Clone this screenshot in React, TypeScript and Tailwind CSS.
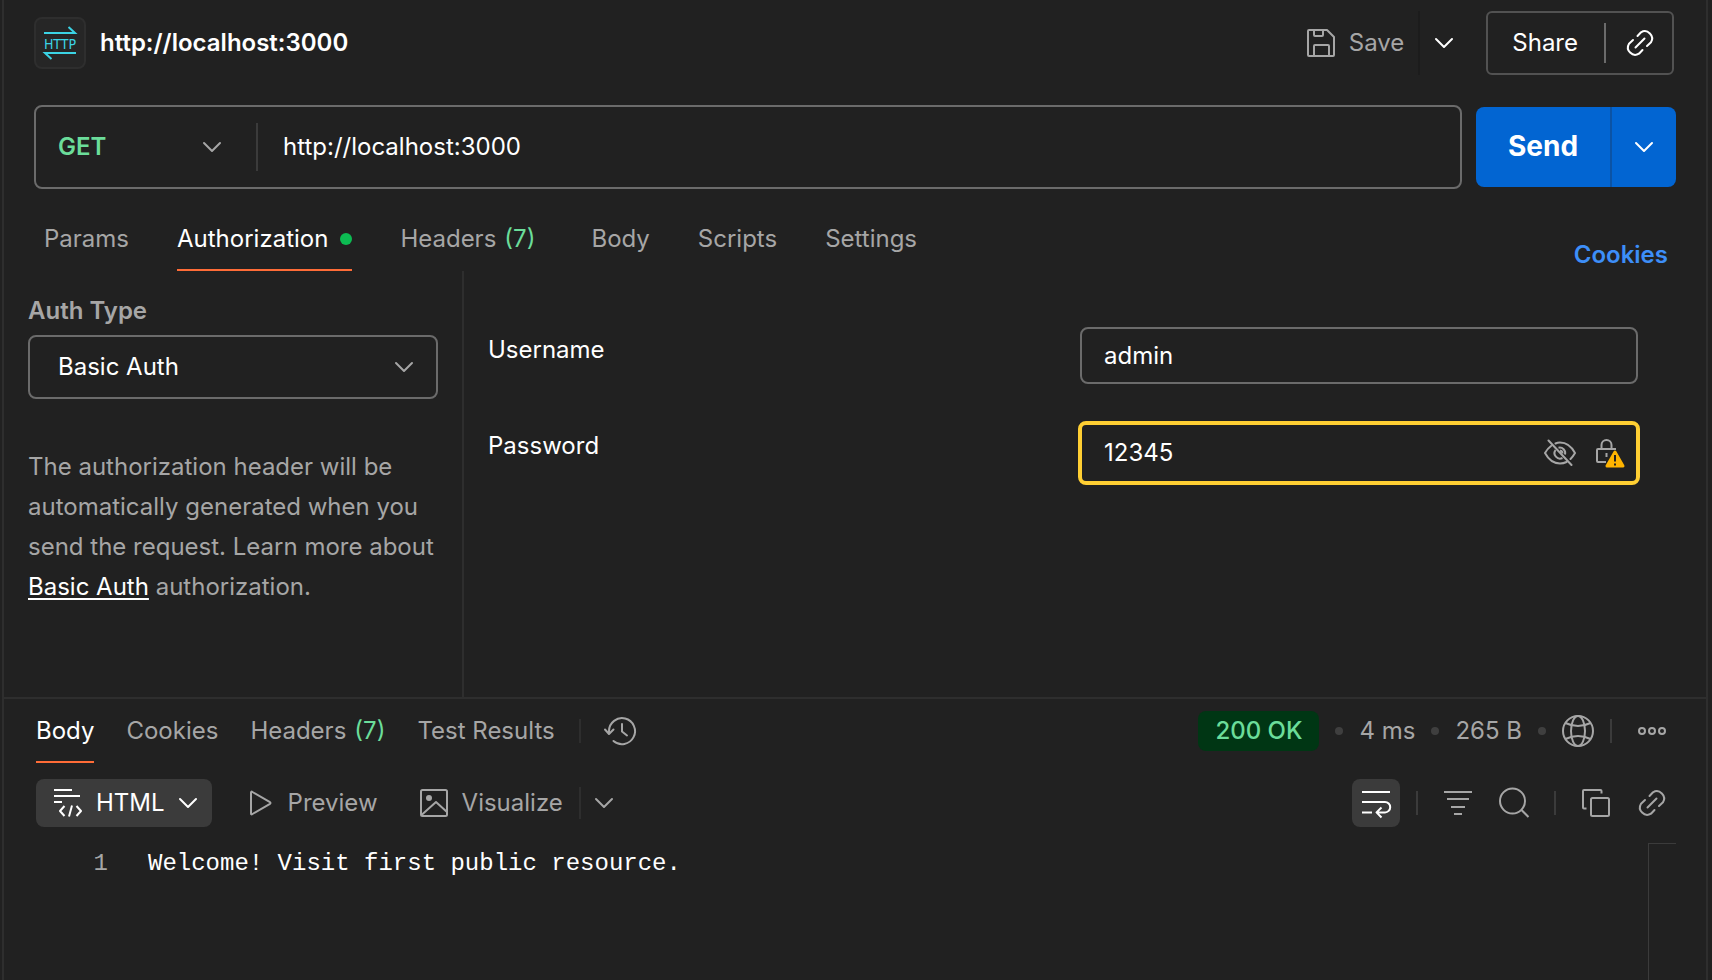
import { useState } from "react";
import type { ReactNode } from "react";

type IconProps = { className?: string };

function Svg({ box, className, children }: { box: string; className?: string; children: ReactNode }) {
  return (
    <svg
      viewBox={box}
      className={className}
      fill="none"
      stroke="currentColor"
      strokeWidth={2}
      strokeLinejoin="round"
      aria-hidden="true"
    >
      {children}
    </svg>
  );
}

const HttpIcon = ({ className }: IconProps) => (
  <Svg box="0 0 36 36" className={className}>
    <path d="M2 8H33L26.5 2M34 28H3L9.500 34" strokeLinejoin="miter" />
    <text
      x="18"
      y="23.5"
      textAnchor="middle"
      fill="currentColor"
      stroke="none"
      className="font-['Liberation_Sans_Narrow','DejaVu_Sans_Condensed',sans-serif] text-[14px]"
    >
      HTTP
    </text>
  </Svg>
);

const Chevron = ({ className }: IconProps) => (
  <Svg box="0 0 20 12" className={className}>
    <path d="M2 2L10 10L18 2" strokeLinecap="round" />
  </Svg>
);

const SaveIcon = ({ className }: IconProps) => (
  <Svg box="0 0 32 32" className={className}>
    <path d="M4 3H22L29 10V28Q29 29 28 29H4Q3 29 3 28V4Q3 3 4 3Z" />
    <path d="M9 3V8Q9 9 10 9H17Q18 9 18 8V3M9 29V19Q9 18 10 18H23Q24 18 24 19V29" />
  </Svg>
);

const LinkIcon = ({ className }: IconProps) => (
  <Svg box="0 0 32 32" className={className}>
    <path
      d="M11.500 20.500L20.500 11.500M13.500 9L17 5.300A7.300 7.300 0 0 1 27 15.300L23 19M18.500 23L15 26.700A7.300 7.300 0 0 1 5 16.700L9 13"
      strokeLinecap="round"
    />
  </Svg>
);

const EyeOffIcon = ({ className }: IconProps) => (
  <Svg box="0 0 32 32" className={className}>
    <path d="M4.500 3.500L27.500 28M11.500 6.500Q13.500 5.500 16 5.500C22 5.500 27.500 9.500 31 16Q29 19.500 26.500 22M22.500 25Q19.500 26.500 16 26.500C10 26.500 4.500 22.500 1 16Q3.500 11.500 7 9" strokeLinecap="round" />
    <path d="M14.500 10.700A5.500 5.500 0 0 1 21 17.500M18.500 21A5.500 5.500 0 0 1 11.500 13M16 13.500Q18.500 14 18.500 16.500" />
  </Svg>
);

const LockWarningIcon = ({ className }: IconProps) => (
  <Svg box="0 0 32 32" className={className}>
    <path d="M22 12H4Q3 12 3 13V24Q3 25 4 25H12M7.500 12V8A5 5 0 0 1 17.500 8V12M12.500 16V20" />
    <path d="M21 15L29 29H13Z" fill="#ffb400" stroke="#ffb400" strokeWidth={3} />
    <path d="M21 18V24.500M21 26.500V28.500" stroke="#212121" />
  </Svg>
);

const HistoryIcon = ({ className }: IconProps) => (
  <Svg box="0 0 36 32" className={className}>
    <path d="M6 18V16A13 13 0 1 1 10.500 26M2 14.500L6 19L10.500 14.500M19 9V16.500L24 20.500" strokeLinecap="round" />
  </Svg>
);

const GlobeIcon = ({ className }: IconProps) => (
  <Svg box="0 0 34 34" className={className}>
    <circle cx="17" cy="17" r="15" />
    <ellipse cx="17" cy="17" rx="7" ry="15" />
    <path d="M4.500 9Q17 15 29.500 9M4.500 25Q17 19 29.500 25" />
  </Svg>
);

const MoreIcon = ({ className }: IconProps) => (
  <Svg box="0 0 32 32" className={className}>
    <circle cx="6" cy="16" r="3" />
    <circle cx="16" cy="16" r="3" />
    <circle cx="26" cy="16" r="3" />
  </Svg>
);

const MarkupIcon = ({ className }: IconProps) => (
  <Svg box="0 0 32 32" className={className}>
    <path d="M2 3H20M2 9H28M2 15H10" />
    <path d="M12.500 19L8 24L12.500 29M24.500 19L29 24L24.500 29M20 18.500L17 29.500" />
  </Svg>
);

const PlayIcon = ({ className }: IconProps) => (
  <Svg box="0 0 32 32" className={className}>
    <path d="M7 5.500V26.500Q7 28 8.500 27L26 16.800Q27 16 26 15.200L8.500 5Q7 4 7 5.500Z" />
  </Svg>
);

const ImageIcon = ({ className }: IconProps) => (
  <Svg box="0 0 32 32" className={className}>
    <rect x="3" y="3" width="26" height="26" rx="1.500" />
    <path d="M3.500 28L18 15L29 25" />
    <circle cx="11" cy="11" r="3" fill="currentColor" stroke="none" />
  </Svg>
);

const WrapIcon = ({ className }: IconProps) => (
  <Svg box="0 0 32 32" className={className}>
    <path d="M2 5H30M2 15H25A5.200 5.200 0 0 1 25 25.400H17M2 25.400H12M21.500 20.500L16.500 25.400L21.500 30.500" />
  </Svg>
);

const FilterIcon = ({ className }: IconProps) => (
  <Svg box="0 0 32 32" className={className}>
    <path d="M2 5H30M5 12H27M9 20H23M12 27H20" />
  </Svg>
);

const SearchIcon = ({ className }: IconProps) => (
  <Svg box="0 0 32 32" className={className}>
    <circle cx="14.500" cy="14" r="12.500" />
    <path d="M23.500 23L30.500 30" />
  </Svg>
);

const CopyIcon = ({ className }: IconProps) => (
  <Svg box="0 0 32 32" className={className}>
    <rect x="11" y="11" width="18" height="18" rx="1.500" />
    <path d="M6.500 21.500H4Q3 21.500 3 20.500V4Q3 3 4 3H20.500Q21.500 3 21.500 4V6.500" />
  </Svg>
);

const Rule = ({ className }: IconProps) => <span className={`w-0.5 shrink-0 ${className ?? ""}`} />;
const Dot = () => <span className="size-2 shrink-0 rounded-full bg-[#3f3f3f]" />;

const requestTabs = ["Params", "Authorization", "Headers", "Body", "Scripts", "Settings"];
const responseTabs = ["Body", "Cookies", "Headers", "Test Results"];

function Tab({ label, active, onSelect }: { label: string; active: boolean; onSelect: () => void }) {
  return (
    <button
      type="button"
      role="tab"
      aria-selected={active}
      onClick={onSelect}
      className={`flex h-full items-center border-b-2 pt-0.5 whitespace-nowrap ${
        active ? "border-[#ff6c37] text-white" : "border-transparent text-[#a6a6a6]"
      }`}
    >
      {label}
      {label === "Headers" && <span className="ml-2 text-[#6bdd9a]">(7)</span>}
      {label === "Authorization" && <span className="ml-3 size-3 rounded-full bg-[#0cbb52]" />}
    </button>
  );
}

export default function App() {
  const [tab, setTab] = useState("Authorization");
  const [view, setView] = useState("Body");
  const [url, setUrl] = useState("http://localhost:3000");
  const [user, setUser] = useState("admin");
  const [password, setPassword] = useState("12345");

  return (
    <div className="min-h-screen bg-[#212121] px-0.5 pr-1 font-['Inter',sans-serif] text-2xl text-white">
      <div className="flex min-h-screen flex-col border-x-2 border-[#2e2e2e]">
        <header className="flex items-center pt-[11px] pr-8 pl-[30px]">
          <span className="flex size-[52px] items-center justify-center rounded-lg border-2 border-[#2e2e2e] bg-[#262626] text-[#3bd3e4]">
            <HttpIcon className="size-9" />
          </span>
          <h1 className="ml-3.5 flex-1 font-semibold">http://localhost:3000</h1>
          <button type="button" className="flex items-center gap-3 text-[#a6a6a6]">
            <SaveIcon className="size-8" />
            Save
          </button>
          <Rule className="ml-3.5 h-16 bg-[#1c1c1c]" />
          <button type="button" aria-label="Save options" className="mr-[30px] ml-3 p-0.5">
            <Chevron className="h-3 w-5" />
          </button>
          <div className="flex h-16 items-center rounded-md border-2 border-[#525252]">
            <button type="button" className="pr-[26px] pl-6">Share</button>
            <Rule className="h-10 bg-[#6b6b6b]" />
            <button type="button" aria-label="Copy link" className="pr-4 pl-[18px]">
              <LinkIcon className="size-8" />
            </button>
          </div>
        </header>

        <form className="mt-[30px] flex items-center pr-[30px] pl-[30px]" onSubmit={(e) => e.preventDefault()}>
          <div className="flex h-[84px] min-w-0 flex-1 items-center rounded-lg border-2 border-[#6b6b6b]">
            <div className="flex w-[220px] items-center justify-between pr-[34px]">
              <select aria-label="Method" className="w-full appearance-none bg-transparent pl-[22px] font-semibold text-[#6bdd9a] outline-none">
                <option>GET</option>
                <option>POST</option>
              </select>
              <Chevron className="h-3 w-5 shrink-0 text-[#a6a6a6]" />
            </div>
            <Rule className="h-12 bg-[#3b3b3b]" />
            <input
              aria-label="Request URL"
              value={url}
              onChange={(e) => setUrl(e.target.value)}
              className="ml-[25px] min-w-0 flex-1 bg-transparent outline-none"
            />
          </div>
          <div className="ml-3.5 flex h-20 items-stretch overflow-hidden rounded-lg bg-[#0265d2]">
            <button type="submit" className="w-[134px] text-[28px] font-bold">Send</button>
            <Rule className="bg-[#0b53a5]" />
            <button type="button" aria-label="Send options" className="flex w-16 items-center justify-center">
              <Chevron className="h-3 w-5" />
            </button>
          </div>
        </form>

        <div className="mt-[18px] flex h-16 items-center pr-[38px] pl-10">
          <div role="tablist" className="flex h-full flex-1">
            <div className="mr-14 flex gap-12">
              {requestTabs.slice(0, 3).map((t) => (
                <Tab key={t} label={t} active={t === tab} onSelect={() => setTab(t)} />
              ))}
            </div>
            <div className="flex gap-12">
              {requestTabs.slice(3).map((t) => (
                <Tab key={t} label={t} active={t === tab} onSelect={() => setTab(t)} />
              ))}
            </div>
          </div>
          <a href="#cookies" className="pt-8 font-semibold text-[#3d8ef8]">Cookies</a>
        </div>

        <main className="flex h-[426px]">
          <section className="w-[460px] shrink-0 border-r-2 border-[#2e2e2e] px-6 pt-6">
            <label htmlFor="auth-type" className="block font-semibold text-[#a6a6a6]">Auth Type</label>
            <div className="mt-2 flex h-16 items-center rounded-lg border-2 border-[#6b6b6b] pr-[22px]">
              <select id="auth-type" className="min-w-0 flex-1 appearance-none bg-transparent pl-7 outline-none">
                <option>Basic Auth</option>
                <option>Bearer Token</option>
              </select>
              <Chevron className="h-3 w-5 shrink-0 text-[#a6a6a6]" />
            </div>
            <p className="mt-12 leading-10 text-[#a6a6a6]">
              The authorization header will be automatically generated when you send the request. Learn more about{" "}
              <a href="#basic-auth" className="text-white underline decoration-2 underline-offset-[3px]">Basic Auth</a> authorization.
            </p>
          </section>
          <section className="flex flex-1 flex-col pt-14 pr-[66px] pl-6">
            <div className="flex items-start justify-between">
              <label htmlFor="username" className="pt-[7px]">Username</label>
              <input
                id="username"
                value={user}
                onChange={(e) => setUser(e.target.value)}
                className="mr-0.5 h-[57px] w-[558px] rounded-lg border-2 border-[#6b6b6b] bg-transparent px-[22px] outline-none"
              />
            </div>
            <div className="mt-[37px] flex items-start justify-between">
              <label htmlFor="password" className="pt-[9px]">Password</label>
              <div className="flex h-16 w-[562px] items-center rounded-lg border-4 border-[#ffcf33] pr-2.5">
                <input
                  id="password"
                  value={password}
                  onChange={(e) => setPassword(e.target.value)}
                  className="min-w-0 flex-1 bg-transparent pl-[22px] outline-none"
                />
                <button type="button" aria-label="Hide password" className="mr-[18px] text-[#a6a6a6]">
                  <EyeOffIcon className="size-8" />
                </button>
                <LockWarningIcon className="size-8 text-[#a6a6a6]" />
              </div>
            </div>
          </section>
        </main>

        <section className="flex flex-1 flex-col border-t-2 border-[#2e2e2e]">
          <div className="flex h-16 items-center pr-[38px] pl-8">
            <div role="tablist" className="flex h-full gap-8">
              {responseTabs.map((t) => (
                <Tab key={t} label={t} active={t === view} onSelect={() => setView(t)} />
              ))}
            </div>
            <Rule className="ml-6 h-6 bg-[#2e2e2e]" />
            <button type="button" aria-label="History" className="ml-[22px] text-[#a6a6a6]">
              <HistoryIcon className="h-8 w-9" />
            </button>
            <div className="ml-auto flex items-center text-[#a6a6a6]">
              <span className="flex h-10 items-center rounded-lg bg-[#003614] px-[17px] font-medium text-[#6bdd9a]">200 OK</span>
              <span className="ml-4 flex items-center gap-4">
                <Dot />
                4 ms
                <Dot />
                265 B
                <Dot />
              </span>
              <GlobeIcon className="ml-[15px] size-[34px]" />
              <Rule className="ml-[15px] h-6 bg-[#3b3b3b]" />
              <button type="button" aria-label="More actions" className="ml-6">
                <MoreIcon className="size-8" />
              </button>
            </div>
          </div>

          <div className="mt-4 flex h-12 items-center pr-[38px] pl-8 text-[#a6a6a6]">
            <button type="button" className="flex h-full items-center rounded-lg bg-[#3b3b3b] pr-3.5 pl-4 text-white">
              <MarkupIcon className="mr-3 size-8" />
              HTML
              <Chevron className="ml-[13px] h-3 w-5" />
            </button>
            <button type="button" className="ml-8 flex items-center gap-3">
              <PlayIcon className="size-8" />
              Preview
            </button>
            <button type="button" className="ml-10 flex items-center gap-3">
              <ImageIcon className="size-8" />
              Visualize
            </button>
            <Rule className="ml-4 h-8 bg-[#2e2e2e]" />
            <button type="button" aria-label="Visualize options" className="ml-[13px]">
              <Chevron className="h-3 w-5" />
            </button>
            <button type="button" aria-label="Wrap lines" className="ml-auto flex size-12 items-center justify-center rounded-lg bg-[#3b3b3b] text-white">
              <WrapIcon className="size-8" />
            </button>
            <Rule className="ml-4 h-6 bg-[#3b3b3b]" />
            <button type="button" aria-label="Filter" className="ml-6">
              <FilterIcon className="size-8" />
            </button>
            <button type="button" aria-label="Search" className="ml-6">
              <SearchIcon className="size-8" />
            </button>
            <Rule className="ml-6 h-6 bg-[#3b3b3b]" />
            <button type="button" aria-label="Copy" className="ml-6">
              <CopyIcon className="size-8" />
            </button>
            <button type="button" aria-label="Link" className="ml-6">
              <LinkIcon className="size-8" />
            </button>
          </div>

          <div className="mt-4 flex flex-1 pr-[30px] font-['Liberation_Mono',monospace]">
            <span className="w-[104px] pt-[5px] text-right leading-8 text-[#a6a6a6]">1</span>
            <code className="ml-10 flex-1 pt-[5px] font-['Liberation_Mono',monospace] leading-8">
              Welcome! Visit first public resource.
            </code>
            <div className="w-7 border-t border-l border-[#3b3b3b]" />
          </div>
        </section>
      </div>
    </div>
  );
}
